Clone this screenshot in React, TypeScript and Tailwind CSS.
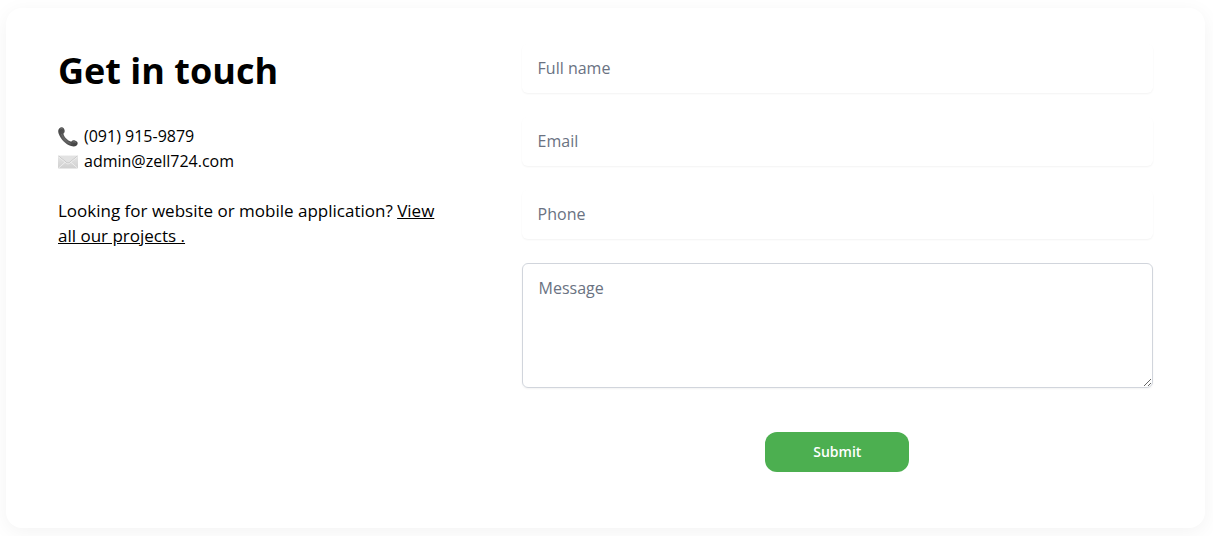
import { ReactNode } from "react";

const fields = [
  { id: "full-name", label: "Full name", type: "text" },
  { id: "email", label: "Email", type: "email" },
  { id: "phone", label: "Phone", type: "tel" }
];

export default function App() {
  return (
    <main className="py-2 pr-2 pl-[6px] font-['Open_Sans',sans-serif] text-base leading-[25px] text-black">
      <section className="grid gap-x-16 gap-y-8 rounded-2xl bg-white px-[52px] pt-9 pb-14 shadow-[0_4px_20px_rgba(0,0,0,0.05)] md:grid-cols-5">
        <div className="md:col-span-2">
          <h1 className="pt-1 text-4xl leading-[46px] font-bold">Get in touch</h1>
          <address className="mt-[30px] not-italic">
            <ContactLine icon={<PhoneIcon />}>(091) 915-9879</ContactLine>
            <ContactLine icon={<MailIcon />}>admin@zell724.com</ContactLine>
          </address>
          <p className="mt-6 pr-4 text-[17px]">
            Looking for website or mobile application?{" "}
            <a href="#projects" className="underline">
              View all our projects .
            </a>
          </p>
        </div>
        <form className="grid gap-6 md:col-span-3" onSubmit={(event) => event.preventDefault()}>
          {fields.map((field) => (
            <input
              key={field.id}
              name={field.id}
              type={field.type}
              placeholder={field.label}
              aria-label={field.label}
              className="block w-full rounded-md px-4 py-3 shadow-[0_1px_2px_rgba(0,0,0,0.05)] placeholder:text-gray-500"
            />
          ))}
          <textarea
            name="message"
            placeholder="Message"
            aria-label="Message"
            className="block h-[125px] w-full rounded-md border border-gray-300 px-4 py-3 shadow-[0_1px_2px_rgba(0,0,0,0.05)] placeholder:text-gray-500"
          />
          <button type="submit" className="mt-5 h-10 w-36 justify-self-center rounded-xl bg-[#4caf50] text-sm font-semibold text-white">
            Submit
          </button>
        </form>
      </section>
    </main>
  );
}

function ContactLine({ icon, children }: { icon: ReactNode; children: ReactNode }) {
  return (
    <p className="flex items-center gap-[6px]">
      {icon}
      <span>{children}</span>
    </p>
  );
}

function PhoneIcon() {
  return (
    <svg viewBox="0 0 20 20" className="size-5" aria-hidden="true">
      <defs>
        <linearGradient id="handset" x1="0" y1="0" x2="1" y2="1">
          <stop offset="0" stopColor="#444" />
          <stop offset="0.5" stopColor="#606060" />
          <stop offset="1" stopColor="#3c3c3c" />
        </linearGradient>
      </defs>
      <path
        d="M1.2 1.4C2.4.2 4.5-.1 5.5.9c1 1 1.5 3.1 1 4.3-.3.8-1.1 1-1 1.9.3 2.7 4.6 7 7.2 7.4.9.1 1.1-.6 1.9-1 1.1-.5 3.5.2 4.5 1.3 1 1 .6 2.6-.5 3.7-1.3 1.2-3.5 1.3-5.5.6C7.5 17.3 2.5 11.8.6 6.400 0 4.500 0 2.600 1.200 1.400Z"
        fill="url(#handset)"
      />
      <path d="M2.2 2.200c.8-.8 2-.8 2.600-.2M14.700 15.100c1-.7 2.600-.2 3.400.6" fill="none" stroke="#888" strokeWidth="0.7" />
      <path d="M3.300 7c1.600 4.300 5.500 8.300 9.500 9.900" fill="none" stroke="#777" strokeWidth="0.6" />
    </svg>
  );
}

function MailIcon() {
  return (
    <svg viewBox="0 0 20 20" className="size-5" aria-hidden="true">
      <defs>
        <linearGradient id="envelope" x1="0" y1="0" x2="0" y2="1">
          <stop offset="0" stopColor="#e6e6e6" />
          <stop offset="1" stopColor="#cfcfcf" />
        </linearGradient>
      </defs>
      <rect y="3.500" width="20" height="13" rx="0.8" fill="url(#envelope)" />
      <path d="m.6 16 7.200-6.300M19.400 16l-7.200-6.300" fill="none" stroke="#f3f3f3" strokeWidth="0.8" />
      <path d="m.5 4 8.300 6.700q1.200.9 2.400 0L19.500 4Z" fill="#e2e2e2" />
      <path d="m.5 4 8.300 6.700q1.200.9 2.400 0L19.500 4" fill="none" stroke="#b9b9b9" strokeWidth="0.7" />
      <path d="m.5 4.800 8.300 6.700q1.200.9 2.400 0l8.300-6.700" fill="none" stroke="#f5f5f5" strokeWidth="0.7" />
    </svg>
  );
}
